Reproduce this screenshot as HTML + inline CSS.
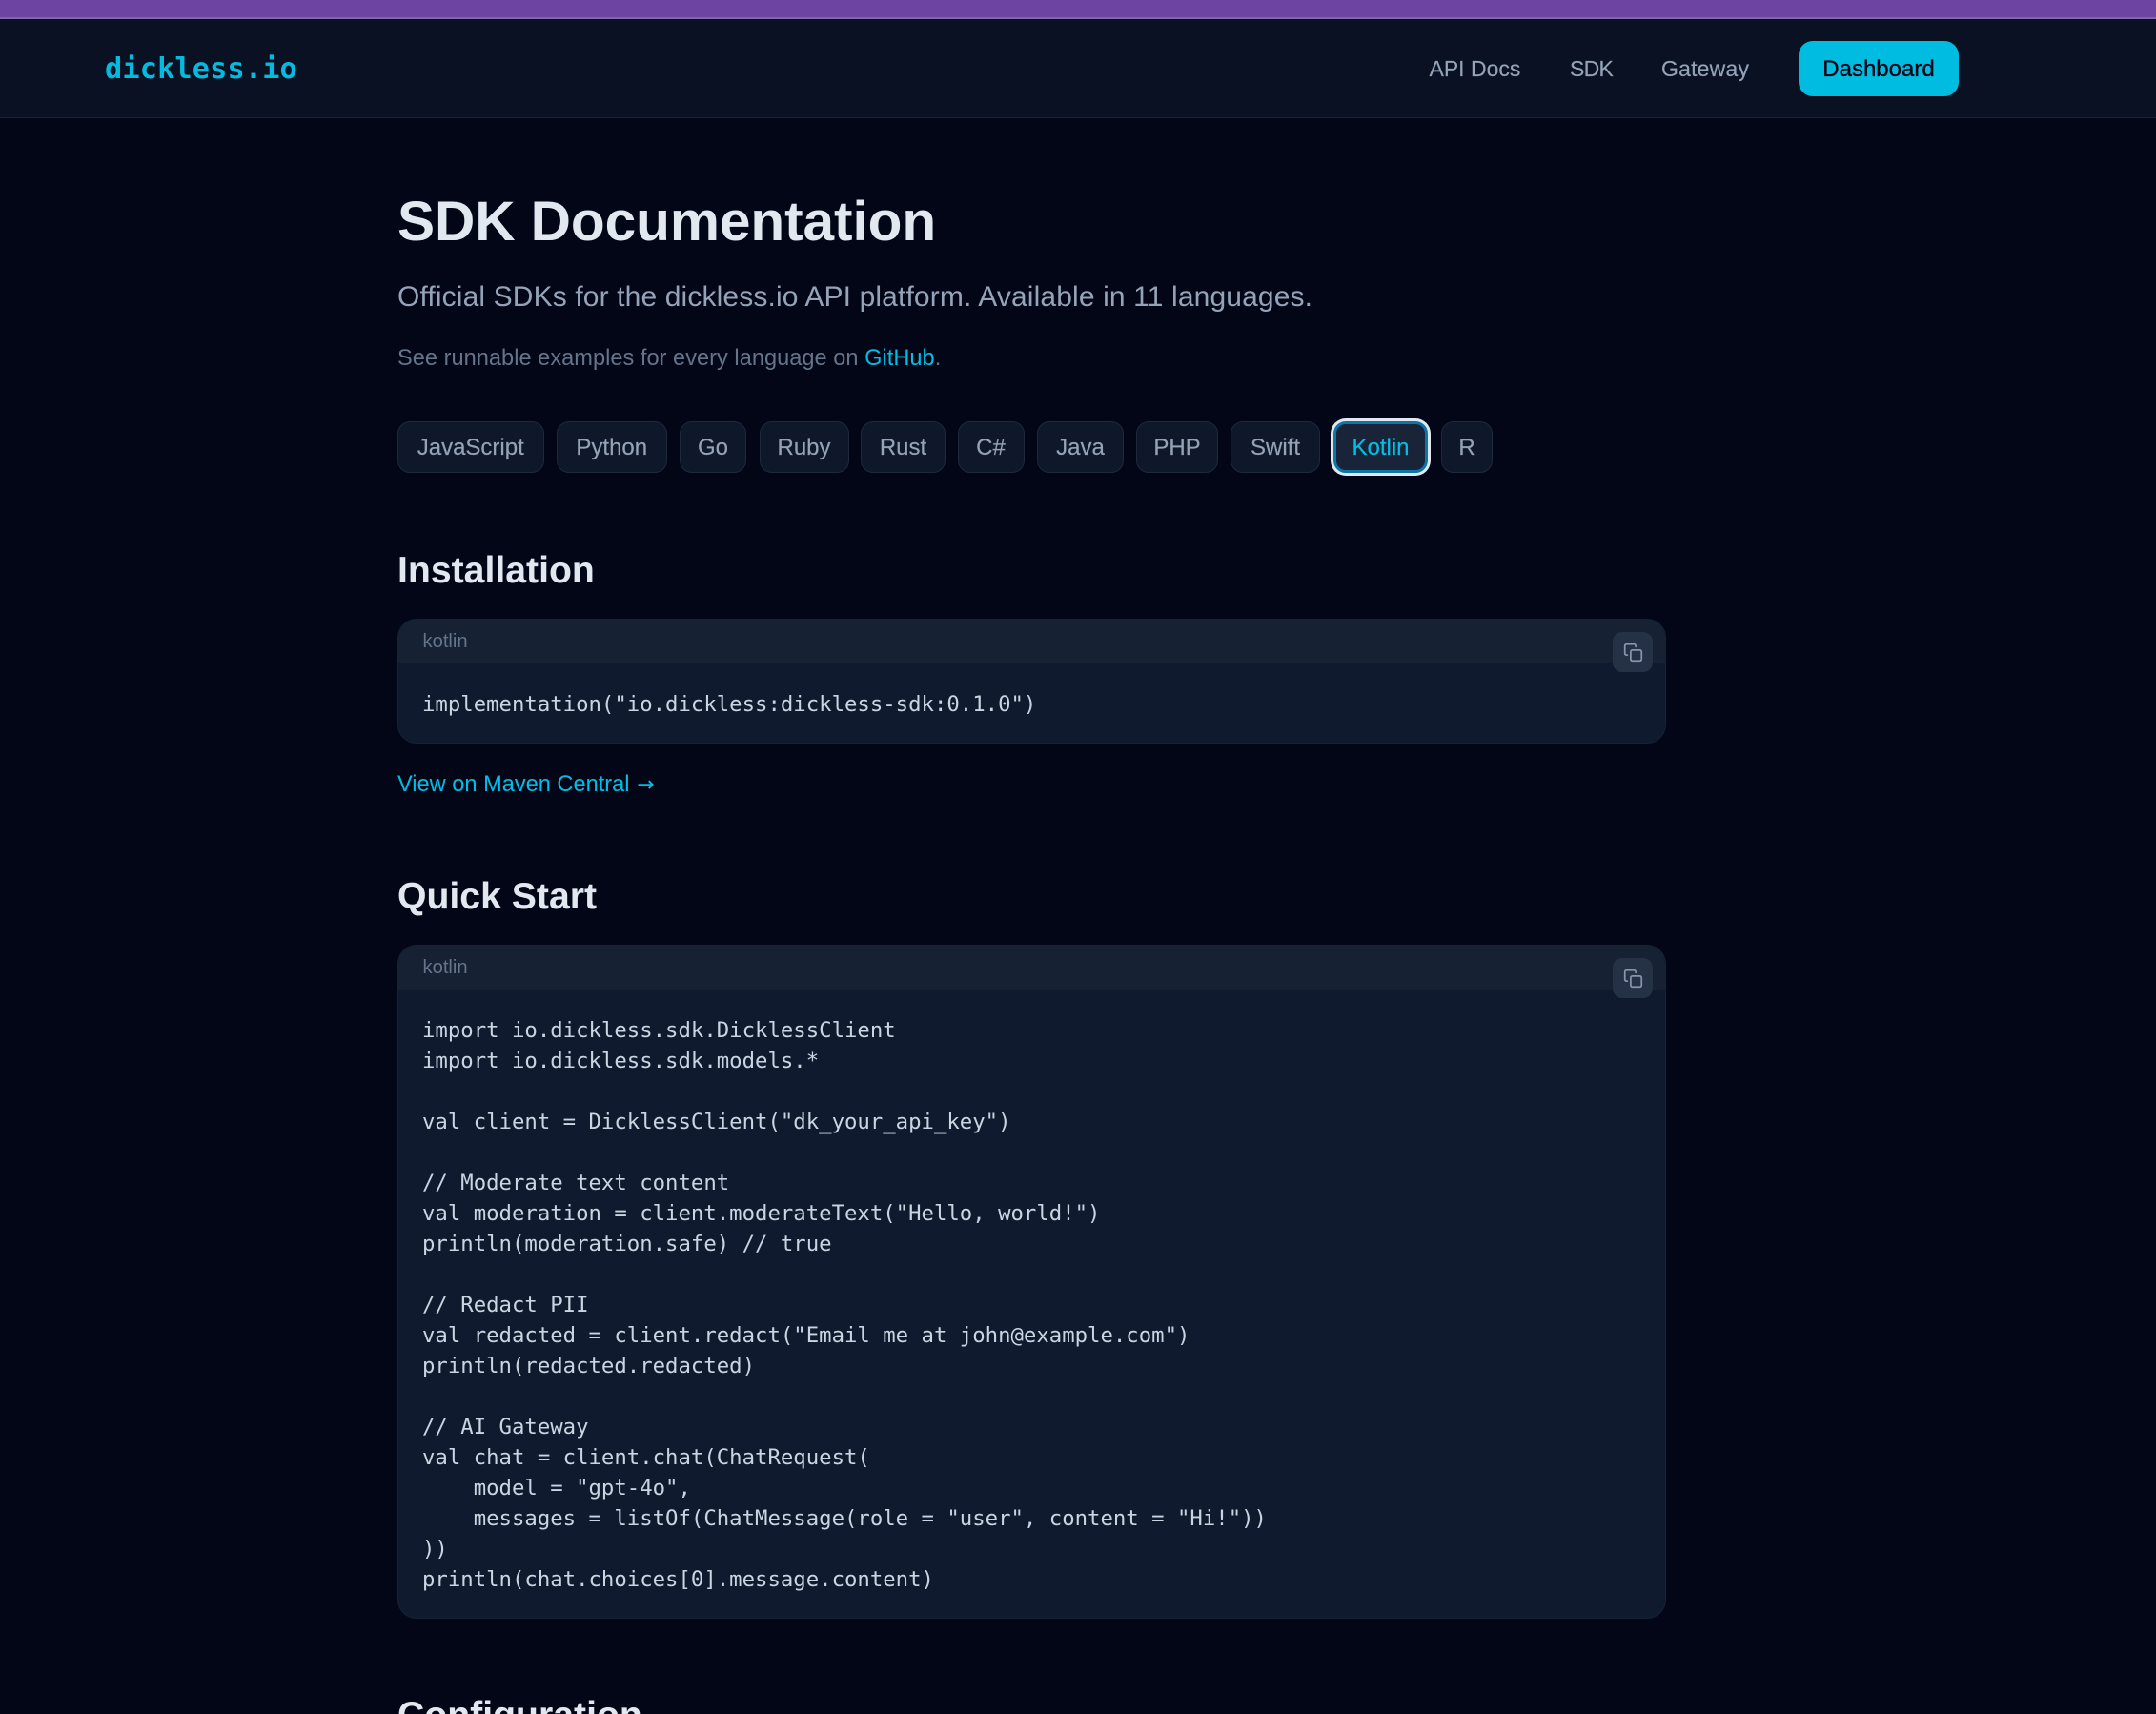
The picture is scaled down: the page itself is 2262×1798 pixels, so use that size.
<!DOCTYPE html>
<html lang="en">
<head>
<meta charset="utf-8">
<title>SDK Documentation - dickless.io</title>
<style>
html,body{margin:0;padding:0;background:#020617;width:2262px;height:1798px;overflow:hidden;}
#root{position:absolute;left:0;top:0;width:2262px;height:1798px;overflow:hidden;font-family:"Liberation Sans",Arial,sans-serif;}
.a{position:absolute;white-space:nowrap;margin:0;}
a{text-decoration:none;color:inherit;}
.topbar{left:0;top:0;width:2262px;height:18px;background:#6e44a2;}
.topline{left:0;top:18px;width:2262px;height:2px;background:#7c68aa;}
nav{position:absolute;left:0;top:20px;width:2262px;height:103px;background:#0a1122;border-bottom:1.5px solid #1a2333;}
.logo{left:110px;top:52.5px;font:bold 30.2px/40px "DejaVu Sans Mono",monospace;color:#04bbdf;letter-spacing:.18px;}
.nl{top:56px;font-size:23px;line-height:32px;color:#94a3b8;-webkit-text-stroke:.15px #94a3b8;}
.dash{left:1887px;top:43px;width:168px;height:58px;border-radius:15px;background:#00bce0;color:#020617;font-size:24px;line-height:60px;text-align:center;-webkit-text-stroke:.35px #020617;}
h1{left:417px;top:197.5px;font-size:58.6px;line-height:70px;font-weight:bold;color:#e2e8f0;letter-spacing:-.08px;}
.sub{left:417px;top:292.5px;font-size:30px;line-height:38px;color:#94a3b8;letter-spacing:.13px;}
.see{left:417px;top:358.5px;font-size:23.6px;line-height:34px;color:#64748b;letter-spacing:.02px;}
.see a,.mvn{color:#00bfe6;}
.tab{top:442px;height:54px;box-sizing:border-box;border:1.5px solid #1e293b;border-radius:13px;background:#0f172a;color:#94a3b8;font-size:24px;line-height:53px;text-align:center;-webkit-text-stroke:.15px #94a3b8;}
.tab.on{background:#1a2438;border:3px solid #0b76a8;color:#00c0e8;line-height:50px;box-shadow:0 0 0 3px #e2e8f0;-webkit-text-stroke:.15px #00c0e8;}
h2{left:417px;font-size:39.2px;line-height:48px;font-weight:bold;color:#e2e8f0;}
.block{left:416.5px;width:1331.5px;box-sizing:border-box;background:#0f1a2e;border:1.5px solid #172237;border-radius:20px;overflow:hidden;}
.head{position:absolute;left:0;top:0;right:0;height:46px;background:#162133;}
.lang{position:absolute;left:26px;top:7px;font-size:20.2px;line-height:32px;color:#64748b;}
.copy{position:absolute;left:1274px;top:12.5px;width:42px;height:42px;border-radius:10px;background:#253145;}
.copy svg{position:absolute;left:11px;top:11.5px;}
pre{position:absolute;left:25.5px;margin:0;font:22.3px/32px "DejaVu Sans Mono","Liberation Mono",monospace;color:#cbd5e1;}
.mvn{left:417px;top:805.5px;font-size:23.6px;line-height:34px;}
.mvn span{font-family:"DejaVu Sans",sans-serif;font-size:22px;margin-left:1px;}
</style>
</head>
<body>
<div id="root">
<div class="a topbar"></div>
<div class="a topline"></div>
<nav></nav>
<a class="a logo">dickless.io</a>
<a class="a nl" style="left:1499.5px">API Docs</a>
<a class="a nl" style="left:1647px;letter-spacing:-.7px">SDK</a>
<a class="a nl" style="left:1743px;letter-spacing:.2px">Gateway</a>
<a class="a dash">Dashboard</a>

<h1 class="a">SDK Documentation</h1>
<p class="a sub">Official SDKs for the dickless.io API platform. Available in 11 languages.</p>
<p class="a see">See runnable examples for every language on <a>GitHub</a>.</p>

<div class="a tab" style="left:416.5px;width:154.5px">JavaScript</div>
<div class="a tab" style="left:584px;width:115.5px">Python</div>
<div class="a tab" style="left:713px;width:70px">Go</div>
<div class="a tab" style="left:796.5px;width:94px">Ruby</div>
<div class="a tab" style="left:903px;width:89px">Rust</div>
<div class="a tab" style="left:1004.5px;width:70px">C#</div>
<div class="a tab" style="left:1088px;width:91px">Java</div>
<div class="a tab" style="left:1192px;width:86px">PHP</div>
<div class="a tab" style="left:1291px;width:94px">Swift</div>
<div class="a tab on" style="left:1399px;width:99px">Kotlin</div>
<div class="a tab" style="left:1512px;width:54px">R</div>

<h2 class="a" style="top:574.5px">Installation</h2>
<div class="a block" style="top:649px;height:131px">
  <div class="head"></div>
  <span class="lang">kotlin</span>
  <div class="copy"><svg width="21" height="21" viewBox="0 0 24 24" fill="none" stroke="#8595ab" stroke-width="2" stroke-linecap="round" stroke-linejoin="round"><rect x="9" y="9" width="13" height="13" rx="2"/><path d="M5 15H4a2 2 0 0 1-2-2V4a2 2 0 0 1 2-2h9a2 2 0 0 1 2 2v1"/></svg></div>
  <pre style="top:72.5px">implementation("io.dickless:dickless-sdk:0.1.0")</pre>
</div>
<a class="a mvn">View on Maven Central <span>→</span></a>

<h2 class="a" style="top:916.5px">Quick Start</h2>
<div class="a block" style="top:991px;height:707px">
  <div class="head"></div>
  <span class="lang">kotlin</span>
  <div class="copy"><svg width="21" height="21" viewBox="0 0 24 24" fill="none" stroke="#8595ab" stroke-width="2" stroke-linecap="round" stroke-linejoin="round"><rect x="9" y="9" width="13" height="13" rx="2"/><path d="M5 15H4a2 2 0 0 1-2-2V4a2 2 0 0 1 2-2h9a2 2 0 0 1 2 2v1"/></svg></div>
  <pre style="top:72.8px">import io.dickless.sdk.DicklessClient
import io.dickless.sdk.models.*

val client = DicklessClient("dk_your_api_key")

// Moderate text content
val moderation = client.moderateText("Hello, world!")
println(moderation.safe) // true

// Redact PII
val redacted = client.redact("Email me at john@example.com")
println(redacted.redacted)

// AI Gateway
val chat = client.chat(ChatRequest(
    model = "gpt-4o",
    messages = listOf(ChatMessage(role = "user", content = "Hi!"))
))
println(chat.choices[0].message.content)</pre>
</div>

<h2 class="a" style="top:1775.5px">Configuration</h2>
</div>
</body>
</html>
